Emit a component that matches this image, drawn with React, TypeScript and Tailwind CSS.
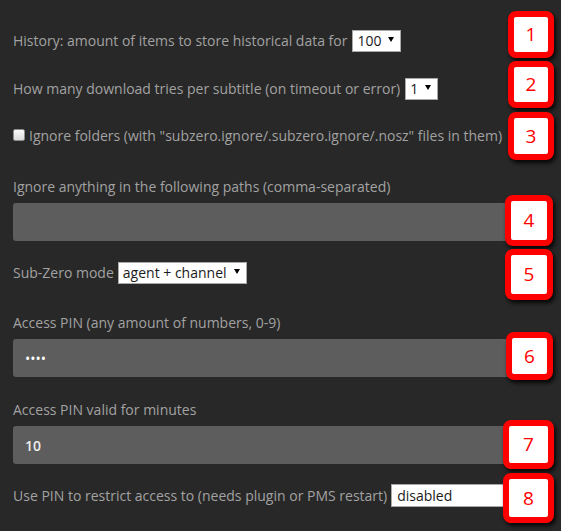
import React from 'react';

const font = { fontFamily: '"Open Sans", "Noto Sans", sans-serif' };

function Select({ value }: { value: string }) {
  return (
    <span className="inline-flex items-center h-[22px] border border-[#a9a9a9] bg-white pl-[4px] pr-[6px] gap-[7px] text-[#1a1a1a] text-[14px] leading-none align-middle font-['Open_Sans',sans-serif]">
      <span>{value}</span>
      <svg width="6" height="5" viewBox="0 0 6 5" className="mb-[2px]">
        <path d="M0 0 H6 L3 5 Z" fill="#000" />
      </svg>
    </span>
  );
}

function Badge({ n, left, top, w, h }: { n: number; left: string; top: string; w: string; h: string }) {
  return (
    <div
      className={`absolute ${left} ${top} ${w} ${h} rounded-[8px] border-[6px] border-[#ff0000] bg-white flex items-center justify-center text-[#ff0000] text-[19px] leading-none shadow-[2px_3px_4px_rgba(0,0,0,0.85)] font-['Open_Sans',sans-serif]`}
    >
      {n}
    </div>
  );
}

export default function App() {
  return (
    <div className="relative w-full min-h-screen h-[531px] overflow-hidden bg-[#282828] text-[#a2a2a2] text-[14px]" style={font}>
      <div className="pt-[30px] pl-[13px] pr-[13px]">
        <div className="h-5 flex items-center whitespace-nowrap">
          <span>History: amount of items to store historical data for</span>
          <span className="ml-[5px]"><Select value="100" /></span>
        </div>

        <div className="mt-[28px] h-5 flex items-center whitespace-nowrap">
          <span>How many download tries per subtitle (on timeout or error)</span>
          <span className="ml-[5px]"><Select value="1" /></span>
        </div>

        <div className="mt-[27px] h-5 flex items-center whitespace-nowrap">
          <span className="w-[12px] h-[12px] border border-[#8d8d8d] rounded-[2px] bg-gradient-to-b from-[#fafafa] to-[#dcdcdc] shrink-0" />
          <span className="ml-[4px]">Ignore folders (with "subzero.ignore/.subzero.ignore/.nosz" files in them)</span>
        </div>

        <div className="mt-[31px] h-5 flex items-center">Ignore anything in the following paths (comma-separated)</div>
        <input
          readOnly
          className="mt-[7px] block w-full h-[38px] rounded-[3px] bg-[#5d5d5d] px-3 text-white outline-none"
          value=""
        />

        <div className="mt-[21px] h-5 flex items-center whitespace-nowrap">
          <span>Sub-Zero mode</span>
          <span className="ml-[4px]"><Select value="agent + channel" /></span>
        </div>

        <div className="mt-[30px] h-5 flex items-center">Access PIN (any amount of numbers, 0-9)</div>
        <input
          readOnly
          type="password"
          className="mt-[7px] block w-full h-[38px] rounded-[3px] bg-[#5d5d5d] px-3 text-white text-[14px] outline-none"
          value="1234"
        />

        <div className="mt-[22px] h-5 flex items-center">Access PIN valid for minutes</div>
        <input
          readOnly
          className="mt-[7px] block w-full h-[38px] rounded-[3px] bg-[#5d5d5d] px-3 text-[#ececec] font-semibold outline-none"
          value="10"
        />

        <div className="mt-[21px] h-5 flex items-center whitespace-nowrap">
          <span>Use PIN to restrict access to (needs plugin or PMS restart)</span>
          <input
            readOnly
            className="ml-[4px] w-[150px] h-[23px] border border-[#a9a9a9] bg-white px-[5px] text-[#1a1a1a] text-[14px] outline-none font-['Open_Sans',sans-serif]"
            value="disabled"
          />
        </div>
      </div>

      <Badge n={1} left="left-[508px]" top="top-[11px]" w="w-[46px]" h="h-[47px]" />
      <Badge n={2} left="left-[508px]" top="top-[61px]" w="w-[46px]" h="h-[47px]" />
      <Badge n={3} left="left-[508px]" top="top-[112px]" w="w-[46px]" h="h-[48px]" />
      <Badge n={4} left="left-[505px]" top="top-[195px]" w="w-[48px]" h="h-[51px]" />
      <Badge n={5} left="left-[505px]" top="top-[249px]" w="w-[48px]" h="h-[51px]" />
      <Badge n={6} left="left-[506px]" top="top-[332px]" w="w-[47px]" h="h-[48px]" />
      <Badge n={7} left="left-[503px]" top="top-[420px]" w="w-[51px]" h="h-[49px]" />
      <Badge n={8} left="left-[503px]" top="top-[473px]" w="w-[51px]" h="h-[50px]" />
    </div>
  );
}
